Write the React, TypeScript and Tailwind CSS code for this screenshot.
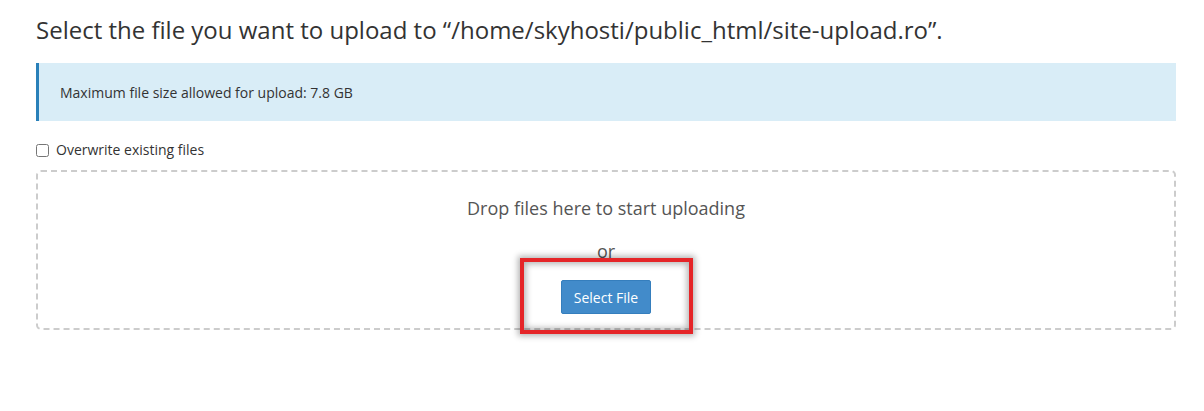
export default function App() {
  return (
    <div className="w-[1204px] h-[411px] bg-white font-['Open_Sans',sans-serif] text-[#333]">
      <div className="pl-[36px] pr-[28px] pt-[12px]">
        <h1 className="text-[24px] leading-[36px] text-[#333] font-normal">
          Select the file you want to upload to “/home/skyhosti/public_html/site-upload.ro”.
        </h1>

        <div className="mt-[15px] h-[58px] flex items-center bg-[#d9edf7] border-l-[3px] border-[#2980b9] pl-[21px] text-[14px] text-[#333]">
          Maximum file size allowed for upload: 7.8 GB
        </div>

        <label className="mt-[19px] flex items-center gap-[7px] text-[14px] leading-[20px] text-[#333]">
          <input type="checkbox" className="w-[13px] h-[13px] m-0" />
          Overwrite existing files
        </label>

        <div className="mt-[10px] h-[160px] border-2 border-dashed border-[#ccc] rounded-[5px] flex flex-col items-center text-[#555]">
          <p className="mt-[23px] text-[18px] leading-[26px]">Drop files here to start uploading</p>
          <p className="mt-[21px] text-[18px] leading-[18px]">or</p>
          <div className="relative mt-[20px]">
            <button className="w-[90px] h-[34px] bg-[#428bca] border border-[#357ebd] rounded-[2px] text-white text-[14px]">
              Select File
            </button>
            <div className="absolute left-[-41px] top-[-22px] w-[173px] h-[76px] border-[4px] border-[#e52528] shadow-[0_0_6px_2px_rgba(0,0,0,0.3),inset_0_0_6px_2px_rgba(0,0,0,0.3)]" />
          </div>
        </div>
      </div>
    </div>
  );
}
